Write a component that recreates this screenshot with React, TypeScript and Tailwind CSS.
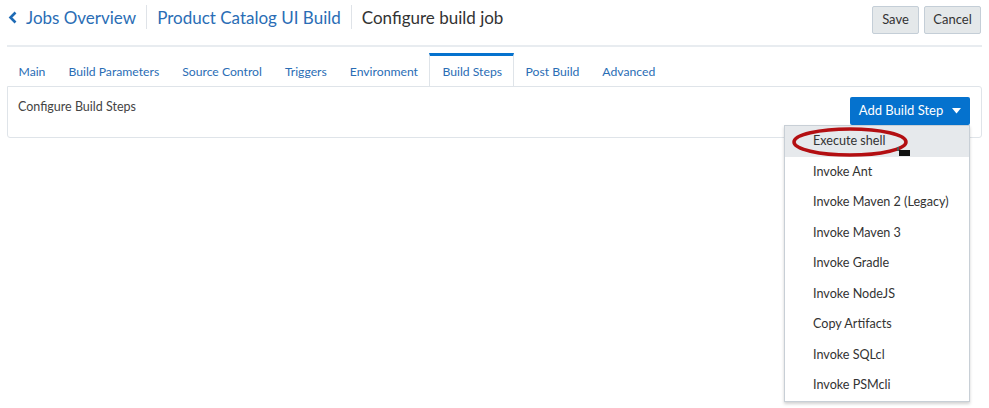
import { useState } from "react";

const tabs = [
  "Main",
  "Build Parameters",
  "Source Control",
  "Triggers",
  "Environment",
  "Build Steps",
  "Post Build",
  "Advanced",
];

const steps = [
  "Execute shell",
  "Invoke Ant",
  "Invoke Maven 2 (Legacy)",
  "Invoke Maven 3",
  "Invoke Gradle",
  "Invoke NodeJS",
  "Copy Artifacts",
  "Invoke SQLcl",
  "Invoke PSMcli",
];

const App = () => {
  const [active] = useState<string>("Build Steps");

  return (
    <div className="w-[989px] h-[408px] bg-white overflow-hidden font-['Lato',sans-serif] text-[#333]">
      <div className="flex items-start justify-between pl-2 pr-2 h-[45px]">
        <div className="flex items-center text-[17px] leading-none mt-[5px] h-[24px]">
          <svg width="10" height="13" viewBox="0 0 10 13" className="mr-[8px]">
            <path d="M7.5 1.5 L2.5 6.5 L7.5 11.5" fill="none" stroke="#1f6bb5" strokeWidth="2.6" />
          </svg>
          <span className="text-[#2a6db5]">Jobs Overview</span>
          <span className="mx-[10px] w-px h-[24px] bg-[#dfe3e8]" />
          <span className="text-[#2a6db5]">Product Catalog UI Build</span>
          <span className="mx-[10px] w-px h-[24px] bg-[#dfe3e8]" />
          <span className="text-[#333]">Configure build job</span>
        </div>
        <div className="flex gap-[5px] mt-[6px] text-[13px]">
          <button className="h-[28px] w-[47px] rounded-[2px] border border-[#c4ced7] bg-[#e4e8ea] text-[#333]">
            Save
          </button>
          <button className="h-[28px] w-[57px] rounded-[2px] border border-[#c4ced7] bg-[#e4e8ea] text-[#333]">
            Cancel
          </button>
        </div>
      </div>
      <div className="mx-[7px] h-[2px] bg-[#e8ecf0]" />
      <div className="flex px-[7px] mt-[6px] text-[12.2px]">
        {tabs.map((t) =>
          t === active ? (
            <div
              key={t}
              className="h-[33px] pl-[12px] pr-[11px] flex items-center pt-[2px] border-t-[3px] border-t-[#0572ce] border-x border-x-[#dfe4e9] bg-white text-[#2a6db5] -mb-px relative z-10"
            >
              {t}
            </div>
          ) : (
            <div key={t} className="h-[33px] px-[11.5px] flex items-center pt-[5px] text-[#2a6db5]">
              {t}
            </div>
          )
        )}
      </div>
      <div className="relative mx-[7px] h-[52px] border border-[#dfe4e9] rounded-b-[3px] rounded-tr-[3px] flex justify-between items-start">
        <div className="pl-[10px] pt-[11px] text-[12.5px] text-[#444]">Configure Build Steps</div>
        <div className="relative mr-[11px] mt-[10px]">
          <button className="h-[28px] w-[120px] flex items-center justify-center gap-[9px] rounded-[2px] bg-[#0572ce] text-white text-[13px]">
            Add Build Step
            <svg width="9" height="6" viewBox="0 0 9 6">
              <path d="M0 0 L9 0 L4.5 5.5 Z" fill="white" />
            </svg>
          </button>
          <div className="absolute right-0 top-[28px] w-[186px] bg-white border border-[#c8cfd6] shadow-[0_2px_3px_rgba(0,0,0,0.18)] z-20">
            {steps.map((s, i) => (
              <div
                key={s}
                className={
                  "relative h-[30.5px] flex items-center pl-[28px] pt-[1px] text-[12.6px] text-[#333] " +
                  (i === 0 ? "bg-[#e6e9ec]" : "")
                }
              >
                {s}
                {i === 0 && (
                  <>
                    <svg
                      width="120"
                      height="32"
                      viewBox="0 0 120 32"
                      className="absolute left-[6px] top-[1px]"
                    >
                      <ellipse cx="59" cy="15" rx="56" ry="13" fill="none" stroke="#b30f12" strokeWidth="3.5" />
                    </svg>
                    <svg width="14" height="10" viewBox="0 0 14 10" className="absolute left-[112px] top-[21px]">
                      <rect x="2" y="3" width="11" height="6" fill="#111" />
                      <rect x="0" y="0" width="2" height="4" fill="#555" />
                    </svg>
                  </>
                )}
              </div>
            ))}
          </div>
        </div>
      </div>
    </div>
  );
};

export default App;
